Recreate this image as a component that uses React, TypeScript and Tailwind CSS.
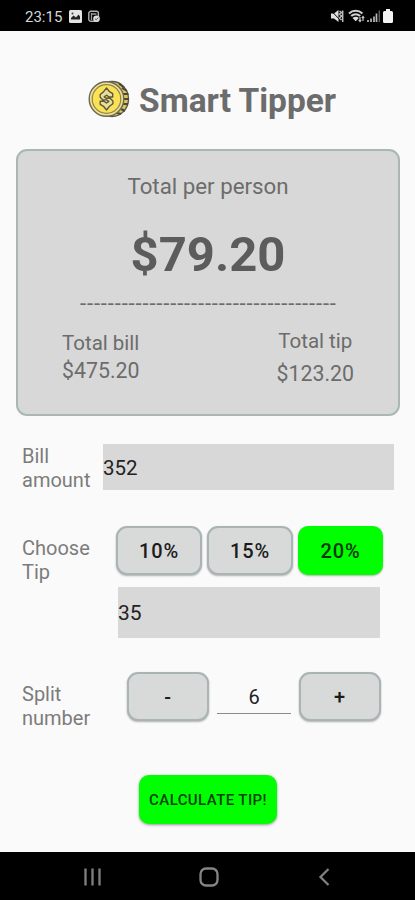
import React from "react";

function Coin() {
  return (
    <svg width="42" height="38" viewBox="0 0 42 38" className="shrink-0">
      <ellipse cx="24" cy="19" rx="16.500" ry="17.500" fill="#e0c95a" stroke="#5a574a" strokeWidth="1.400" />
      <path d="M31 3.500l5 4M34 8l5 3M35 14h5.500M35 19h5.500M35 24h5M33 29l4 2M29 33l4 1" stroke="#4a473b" strokeWidth="2" />
      <circle cx="18.500" cy="19" r="17.300" fill="#efe08a" stroke="#6b685c" strokeWidth="1.400" />
      <circle cx="18.500" cy="19" r="14.300" fill="#fbe255" stroke="#8d8455" strokeWidth="1.200" />
      <path
        d="M18.500 8l3 3.700 3.200 2v3.300h-3.600l-2.600-1.800-2.300 1.600 2.300 1.500h3.600l2.800 2.700v2.700l-3.400 2.600-3 3.700-3-3.700-3.300-2v-3.100h3.600l2.700 1.800 2.300-1.600-2.300-1.500h-3.600l-2.700-2.600v-2.800l3.300-2.600z"
        fill="#eadf98"
        stroke="#5b5740"
        strokeWidth="1.400"
        strokeLinejoin="round"
      />
    </svg>
  );
}

function StatusBar() {
  return (
    <div className="flex h-[31px] shrink-0 items-center bg-black pl-[25px] pr-[22px] pt-px text-[#d8d8d8]">
      <span className="mt-px w-[38px] whitespace-nowrap text-[15px] leading-[18px]">23:15</span>
      <svg className="ml-[6px]" width="13" height="13" viewBox="0 0 13 13">
        <rect width="13" height="13" rx="1.500" fill="#e4e4e4" />
        <path d="M2 9.500V8l2.500-2.500L7 7.500l2.500-3L11 6.500v3z" fill="#222" />
        <circle cx="3.500" cy="3.500" r="1" fill="#444" />
      </svg>
      <svg className="ml-[6px]" width="12" height="13" viewBox="0 0 12 13">
        <rect x=".8" y="1.300" width="9.600" height="10" rx="2" fill="none" stroke="#b0b0b0" strokeWidth="1.400" />
        <path d="M3.500 3v7M3.500 4h5" stroke="#999" strokeWidth="1.300" />
        <circle cx="8.500" cy="8.700" r="3.300" fill="#ddd" />
        <path d="M7 8.700l1.300 1.200 2-2.300" fill="none" stroke="#555" />
      </svg>
      <div className="grow" />
      <svg className="-ml-px mr-px" width="14" height="14" viewBox="0 0 14 14">
        <path d="M1 4.500h3L8.500 1v12L4 9.500H1z" fill="#e0e0e0" />
        <path d="M.5 1l11.500 12" stroke="#000" strokeWidth="1" />
        <path d="M9.500 2l2 1.500-2 1.500 2 2-2 2 2 2M12.700 1.500v11.500" fill="none" stroke="#bbb" strokeWidth="1.500" />
      </svg>
      <svg className="ml-[3px]" width="17" height="14" viewBox="0 0 17 14">
        <path d="M1 4.500c3.700-3.700 9.700-3.700 13.400 0M3.200 7c2.500-2.500 6.500-2.500 9 0" fill="none" stroke="#d0d0d0" strokeWidth="2" />
        <path d="M4.500 9c2-1.700 4.400-1.700 6.400 0l-3.200 3.200z" fill="#ddd" />
        <path d="M12 8v4.500M15 7.500V12M10.800 11l1.200 1.500 1.200-1.500M13.800 9L15 7.500 16.200 9" fill="none" stroke="#ccc" strokeWidth="1.200" />
      </svg>
      <svg className="ml-[2px]" width="14" height="14" viewBox="0 0 14 14">
        <path d="M1 13v-2M4 13v-3.500M7 13V7.500M9.500 13V4.500" stroke="#b8b8b8" strokeWidth="1.700" />
        <path d="M12.300 13V1.500" stroke="#666" strokeWidth="1.300" />
      </svg>
      <svg className="ml-[2px]" width="10" height="14" viewBox="0 0 10 14">
        <path d="M3 0h4v2h1.500Q10 2 10 3.500v9Q10 14 8.500 14h-7Q0 14 0 12.500v-9Q0 2 1.500 2H3z" fill="#f4f4f4" />
      </svg>
    </div>
  );
}

function OutlinedButton({ label, className }: { label: string; className: string }) {
  return (
    <button
      className={
        "flex h-[49px] shrink-0 items-center justify-center rounded-[11px] border-2 border-[#a9b4b5] bg-[#d8dada] text-[20px] font-medium tracking-[0.8px] text-[#1c1c1c] shadow-[0_1px_2px_rgba(0,0,0,0.3)] " +
        className
      }
    >
      {label}
    </button>
  );
}

export default function App() {
  return (
    <div className="flex h-[900px] w-[415px] flex-col overflow-hidden bg-[#fafafa] font-['Roboto','Liberation_Sans',sans-serif] text-[#7c7c7c]">
      <StatusBar />

      <header className="mt-[48px] flex h-[40px] shrink-0 items-center pl-[88px]">
        <Coin />
        <h1 className="ml-[9px] mt-[3px] whitespace-nowrap text-[33.500px] font-bold leading-[40px] text-[#6c6c6c]">Smart Tipper</h1>
      </header>

      <section className="ml-[16px] mt-[30px] h-[267px] w-[384px] shrink-0 rounded-[11px] border-2 border-[#a9b8b4] bg-[#d8d8d8] text-center text-[#6c6c6c]">
        <p className="mt-[22px] text-[22.300px] leading-[26px]">Total per person</p>
        <p className="mt-[27px] text-[49px] font-bold leading-[58px] text-[#5c5c5c]">$79.20</p>
        <p className="ml-[62px] mt-[8px] h-[24px] whitespace-nowrap text-left text-[22px] leading-[24px] tracking-[0.86px]">
          -------------------------------------
        </p>
        <div className="flex justify-between pl-[44px] pr-[44px]">
          <div className="mt-[15px] text-left">
            <p className="text-[20.500px] leading-[24px]">Total bill</p>
            <p className="mt-[4px] text-[21.300px] leading-[24px]">$475.20</p>
          </div>
          <div className="mt-[13px]">
            <p className="text-[20.500px] leading-[24px]">Total tip</p>
            <p className="mt-[9px] text-[21.300px] leading-[24px]">$123.20</p>
          </div>
        </div>
      </section>

      <div className="mt-[28px] flex h-[46px] shrink-0 pl-[22px]">
        <p className="w-[81px] text-[20px] leading-[24px]">Bill<br />amount</p>
        <div className="flex w-[291px] items-center bg-[#d8d8d8] pt-[2px] text-[20.500px] text-[#222]">352</div>
      </div>

      <div className="mt-[36px] flex h-[112px] shrink-0 pl-[22px]">
        <p className="mt-[10px] w-[94px] text-[20px] leading-[24px]">Choose<br />Tip</p>
        <div>
          <div className="flex gap-[5px]">
            <OutlinedButton label="10%" className="w-[86px]" />
            <OutlinedButton label="15%" className="w-[86px]" />
            <button className="flex h-[49px] w-[85px] items-center justify-center rounded-[10px] bg-[#00ff00] text-[20px] font-medium tracking-[0.8px] text-[#0a380a] shadow-[0_1px_2px_rgba(0,0,0,0.3)]">
              20%
            </button>
          </div>
          <div className="ml-[2px] mt-[12px] flex h-[51px] w-[262px] items-center bg-[#d8d8d8] pt-[2px] text-[21px] text-[#222]">35</div>
        </div>
      </div>

      <div className="mt-[34px] flex h-[60px] shrink-0 pl-[22px]">
        <p className="mt-[10px] w-[105px] text-[20px] leading-[24px]">Split<br />number</p>
        <OutlinedButton label="-" className="w-[82px]" />
        <div className="ml-[8px] mr-[8px] h-[42px] w-[74px] border-b border-[#8c8c8c] pt-[12px] text-center text-[20px] leading-[27px] text-[#222]">6</div>
        <OutlinedButton label="+" className="w-[82px]" />
      </div>

      <button className="ml-[139px] mt-[43px] flex h-[49px] w-[138px] shrink-0 items-center justify-center whitespace-nowrap rounded-[10px] bg-[#00ff00] pt-[2px] text-[15px] font-medium tracking-[0.4px] text-[#084008] shadow-[0_1px_3px_rgba(0,0,0,0.4)]">
        CALCULATE TIP!
      </button>

      <nav className="mt-auto flex h-[48px] shrink-0 items-center justify-between bg-black pl-[84px] pr-[85px] pt-[2px]">
        <svg width="17" height="18" viewBox="0 0 17 18">
          <path d="M1.500 .5v17M8.500 .5v17M15.500 .5v17" stroke="#808080" strokeWidth="2.300" />
        </svg>
        <svg className="-ml-[2px]" width="20" height="20" viewBox="0 0 20 20">
          <rect x="1.500" y="1.500" width="17" height="17" rx="5.500" fill="none" stroke="#858585" strokeWidth="2.300" />
        </svg>
        <svg width="12" height="18" viewBox="0 0 12 18">
          <path d="M10.500 1L2.500 9l8 8" fill="none" stroke="#808080" strokeWidth="2.300" />
        </svg>
      </nav>
    </div>
  );
}
